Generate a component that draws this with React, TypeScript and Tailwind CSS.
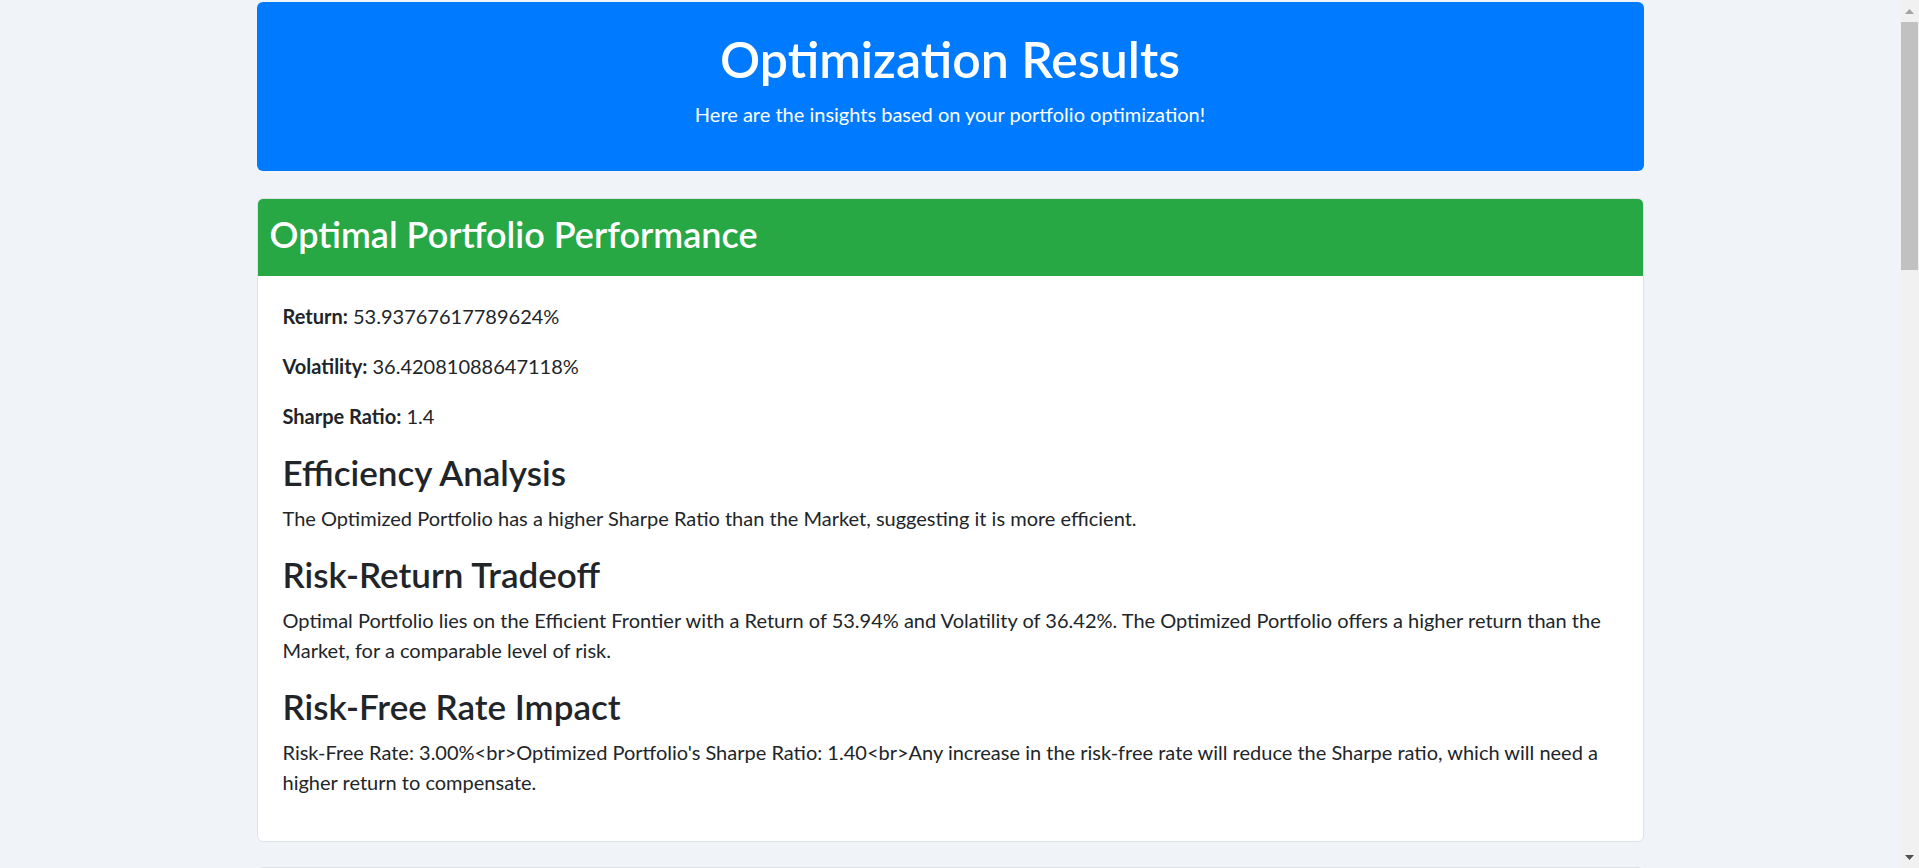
import React from 'react';

const font = { fontFamily: 'Lato, "Open Sans", sans-serif' };

function Metric({ label, value }: { label: string; value: string }) {
  return (
    <p className="mb-[20px] leading-[30px]">
      <strong className="font-bold">{label}</strong> {value}
    </p>
  );
}

function Section({ title, children }: { title: string; children: React.ReactNode }) {
  return (
    <>
      <h3 className="mb-[10px] text-[35px] leading-[42px] font-semibold text-[#212529]">{title}</h3>
      <p className="mb-[20px] leading-[30px]">{children}</p>
    </>
  );
}

export default function App() {
  return (
    <div className="flex h-[868px] w-full overflow-hidden bg-[#f0f4f8]" style={font}>
      <main className="flex-1 overflow-hidden pt-[2px]">
        <div className="mx-auto w-[1387px] text-[20px] text-[#212529]">
          <header className="rounded-[6px] bg-[#007bff] px-[25px] pt-[27px] pb-[22px] text-center text-white">
            <h1 className="mb-[10px] text-[50px] leading-[60px] font-semibold">Optimization Results</h1>
            <p className="mb-[20px] leading-[30px]">Here are the insights based on your portfolio optimization!</p>
          </header>

          <section className="mt-[27px] overflow-hidden rounded-[6px] border border-[#dee2e6] bg-white">
            <div className="flex h-[77px] items-center bg-[#28a745] px-[12px] pb-[7px] text-white">
              <h2 className="text-[36px] leading-[44px] font-semibold">Optimal Portfolio Performance</h2>
            </div>
            <div className="px-[25px] pt-[25px] pb-[24px]">
              <Metric label="Return:" value="53.93767617789624%" />
              <Metric label="Volatility:" value="36.42081088647118%" />
              <Metric label="Sharpe Ratio:" value="1.4" />

              <Section title="Efficiency Analysis">
                The Optimized Portfolio has a higher Sharpe Ratio than the Market, suggesting it is more efficient.
              </Section>
              <Section title="Risk-Return Tradeoff">
                Optimal Portfolio lies on the Efficient Frontier with a Return of 53.94% and Volatility of 36.42%. The
                Optimized Portfolio offers a higher return than the Market, for a comparable level of risk.
              </Section>
              <Section title="Risk-Free Rate Impact">
                {"Risk-Free Rate: 3.00%<br>Optimized Portfolio's Sharpe Ratio: 1.40<br>Any increase in the risk-free rate will reduce the Sharpe ratio, which will need a higher return to compensate."}
              </Section>
            </div>
          </section>

          <section className="mt-[25px] h-[200px] rounded-[6px] border border-[#dee2e6] bg-white" />
        </div>
      </main>

      {/* fake windows scrollbar */}
      <div className="flex w-[19px] flex-col items-center bg-[#f1f1f1]">
        <div className="flex h-[22px] w-full items-center justify-center">
          <svg width="9" height="5" viewBox="0 0 9 5">
            <path d="M0 5 L4.5 0 L9 5 Z" fill="#a3a3a3" />
          </svg>
        </div>
        <div className="h-[248px] w-[17px] bg-[#c1c1c1]" />
        <div className="flex-1" />
        <div className="flex h-[22px] w-full items-center justify-center">
          <svg width="9" height="5" viewBox="0 0 9 5">
            <path d="M0 0 L9 0 L4.5 5 Z" fill="#505050" />
          </svg>
        </div>
      </div>
    </div>
  );
}
